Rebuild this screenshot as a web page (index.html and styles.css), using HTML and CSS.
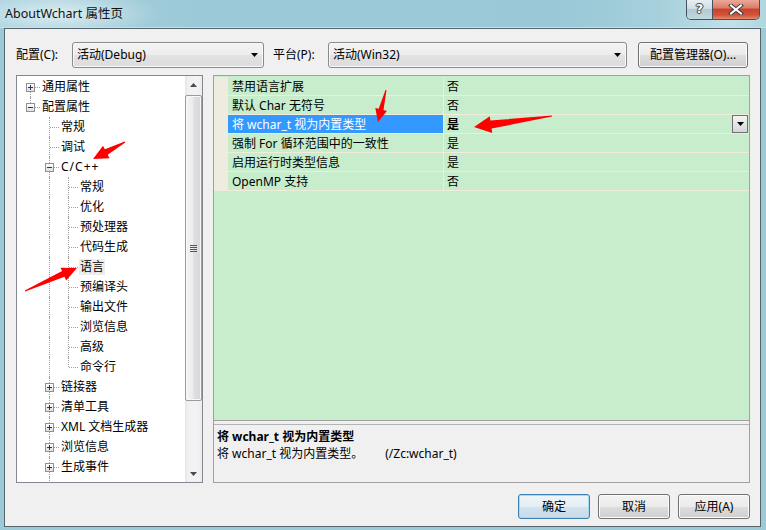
FILE: index.html
```html
<!DOCTYPE html>
<html>
<head>
<meta charset="utf-8">
<link rel="stylesheet" href="styles.css">
</head>
<body>
<div class="window">
  <div class="titlebar">
    <div class="title">AboutWchart 属性页</div>
    <div class="tb-btns">
      <div class="tb-help">?</div>
      <div class="tb-close">
        <svg width="16" height="11" viewBox="0 0 16 11"><path d="M3 1.5 L13 9.5 M13 1.5 L3 9.5" stroke="#3b3b3b" stroke-width="4" stroke-linecap="square"/><path d="M3 1.5 L13 9.5 M13 1.5 L3 9.5" stroke="#ffffff" stroke-width="2" stroke-linecap="square"/></svg>
      </div>
    </div>
  </div>
  <div class="client">
    <div class="toolbar">
      <span class="lbl lbl1">配置(C):</span>
      <div class="combo combo1"><span>活动(Debug)</span><svg class="carrow" width="7" height="4"><polygon points="0,0 7,0 3.5,4" fill="#000"/></svg></div>
      <span class="lbl lbl2">平台(P):</span>
      <div class="combo combo2"><span>活动(Win32)</span><svg class="carrow" width="7" height="4"><polygon points="0,0 7,0 3.5,4" fill="#000"/></svg></div>
      <div class="btn btn-mgr">配置管理器(O)...</div>
    </div>
    <div class="main">
      <div class="tree">
        <div class="items">
          <div class="row"><span class="c f"><i class="bx p"></i></span><span class="tx">通用属性</span></div>
          <div class="row"><span class="c l"><i class="bx"></i></span><span class="tx">配置属性</span></div>
          <div class="row"><span class="c"></span><span class="c t"></span><span class="tx">常规</span></div>
          <div class="row"><span class="c"></span><span class="c t"></span><span class="tx">调试</span></div>
          <div class="row"><span class="c"></span><span class="c t"><i class="bx"></i></span><span class="tx cpp">C/C++</span></div>
          <div class="row"><span class="c"></span><span class="c v"></span><span class="c t"></span><span class="tx">常规</span></div>
          <div class="row"><span class="c"></span><span class="c v"></span><span class="c t"></span><span class="tx">优化</span></div>
          <div class="row"><span class="c"></span><span class="c v"></span><span class="c t"></span><span class="tx">预处理器</span></div>
          <div class="row"><span class="c"></span><span class="c v"></span><span class="c t"></span><span class="tx">代码生成</span></div>
          <div class="row"><span class="c"></span><span class="c v"></span><span class="c t"></span><span class="tx sel">语言</span></div>
          <div class="row"><span class="c"></span><span class="c v"></span><span class="c t"></span><span class="tx">预编译头</span></div>
          <div class="row"><span class="c"></span><span class="c v"></span><span class="c t"></span><span class="tx">输出文件</span></div>
          <div class="row"><span class="c"></span><span class="c v"></span><span class="c t"></span><span class="tx">浏览信息</span></div>
          <div class="row"><span class="c"></span><span class="c v"></span><span class="c t"></span><span class="tx">高级</span></div>
          <div class="row"><span class="c"></span><span class="c v"></span><span class="c l"></span><span class="tx">命令行</span></div>
          <div class="row"><span class="c"></span><span class="c t"><i class="bx p"></i></span><span class="tx">链接器</span></div>
          <div class="row"><span class="c"></span><span class="c t"><i class="bx p"></i></span><span class="tx">清单工具</span></div>
          <div class="row"><span class="c"></span><span class="c t"><i class="bx p"></i></span><span class="tx">XML 文档生成器</span></div>
          <div class="row"><span class="c"></span><span class="c t"><i class="bx p"></i></span><span class="tx">浏览信息</span></div>
          <div class="row"><span class="c"></span><span class="c t"><i class="bx p"></i></span><span class="tx">生成事件</span></div>
          <div class="row"><span class="c"></span><span class="c t"></span><span class="tx"></span></div>
        </div>
        <div class="vscroll">
          <div class="sb-btn"><svg width="7" height="4"><polygon points="3.5,0 7,4 0,4" fill="#4a4a4a"/></svg></div>
          <div class="thumb"><div class="grip"></div></div>
          <div class="sb-fill"></div>
          <div class="sb-btn"><svg width="7" height="4"><polygon points="0,0 7,0 3.5,4" fill="#4a4a4a"/></svg></div>
        </div>
      </div>
      <div class="grid">
        <div class="props">
          <div class="prow"><span class="gut"></span><span class="pname">禁用语言扩展</span><span class="pval">否</span></div>
          <div class="prow"><span class="gut"></span><span class="pname">默认 Char 无符号</span><span class="pval">否</span></div>
          <div class="prow"><span class="gut"></span><span class="pname psel">将 wchar_t 视为内置类型</span><span class="pval bold">是<span class="ddbtn"><svg width="7" height="4"><polygon points="0,0 7,0 3.5,4" fill="#000"/></svg></span></span></div>
          <div class="prow"><span class="gut"></span><span class="pname">强制 For 循环范围中的一致性</span><span class="pval">是</span></div>
          <div class="prow"><span class="gut"></span><span class="pname">启用运行时类型信息</span><span class="pval">是</span></div>
          <div class="prow"><span class="gut"></span><span class="pname">OpenMP 支持</span><span class="pval">否</span></div>
        </div>
        <div class="desc">
          <div class="desc-title">将 wchar_t 视为内置类型</div>
          <div class="desc-text">将 wchar_t 视为内置类型。<span class="switch">(/Zc:wchar_t)</span></div>
        </div>
      </div>
    </div>
    <div class="buttons">
      <div class="btn btn-default">确定</div>
      <div class="btn">取消</div>
      <div class="btn">应用(A)</div>
    </div>
  </div>
  <svg class="annot" width="766" height="530" viewBox="0 0 766 530">
    <polygon fill="#ff0000" points="125.3,142.5 107.7,154.7 109.6,158.2 93,159 103,145.8 104.9,149.3 124.7,141.5"/>
    <polygon fill="#ff0000" points="25.2,291.5 64.5,276.8 66.1,280.5 77,268 60.5,267.7 62.1,270.9 24.8,290.5"/>
    <polygon fill="#ff0000" points="386.5,90.1 383.5,110 386.9,110.9 378,122 375.3,107.9 378.7,108.8 385.5,89.9"/>
    <polygon fill="#ff0000" points="552,116.6 491.6,128.6 492.2,133 474,127 489.8,116.2 490.4,120.6 552,115.4"/>
  </svg>
</div>
</body>
</html>
```

FILE: styles.css
```css
* { box-sizing: border-box; }
body {
  margin: 0;
  background: #9cc9d7;
  font-family: "Noto Sans", "Noto Sans CJK SC", sans-serif;
  font-size: 12px;
  color: #000;
}
.window {
  position: relative;
  width: 766px;
  height: 530px;
  display: flex;
  flex-direction: column;
  overflow: hidden;
  background: #9dcad7;
}
.titlebar {
  height: 28px;
  flex: none;
  display: flex;
  background:
    radial-gradient(ellipse 100px 24px at 60px 14px, rgba(255,255,255,0.6), rgba(255,255,255,0) 100%),
    linear-gradient(90deg, #a9d2de 0, #9cc9d7 200px, #9ac8d6 560px, #a6d0dc 660px, #c2e0e8 730px, #b0d6e0 766px);
  box-shadow: inset 0 -1px 0 #c4e2ea;
}
.title {
  padding-left: 5px;
  line-height: 27px;
  font-size: 12.5px;
  color: #111;
}
.tb-btns {
  margin-left: auto;
  margin-right: 6px;
  display: flex;
  height: 20px;
  border: 1px solid #44545e;
  border-top: none;
  border-radius: 0 0 5px 5px;
  overflow: hidden;
}
.tb-help {
  width: 26px;
  height: 19px;
  border-right: 1px solid #44545e;
  background: linear-gradient(#e6eff3 0, #cfdee5 45%, #b2c9d3 50%, #c2d8e1 100%);
  color: #fff;
  font-family: "DejaVu Sans", sans-serif;
  font-weight: bold;
  font-size: 13px;
  line-height: 18px;
  text-align: center;
  text-shadow: 0 0 1px #333, 0 0 1px #333, 1px 0 0 #555, -1px 0 0 #555, 0 1px 0 #555, 0 -1px 0 #555;
}
.tb-close {
  width: 46px;
  height: 19px;
  display: flex;
  align-items: center;
  justify-content: center;
  background: linear-gradient(#eaa999 0, #dd7e6b 40%, #c9432c 50%, #d2553c 80%, #e08a6f 100%);
}
.client {
  flex: 1;
  margin: 0 5px 3px 4px;
  border: 1px solid #56656c;
  background: #f0f0f0;
  display: flex;
  flex-direction: column;
}
.toolbar {
  display: flex;
  align-items: center;
  height: 26px;
  margin-top: 13px;
  padding: 0 12px 0 11px;
  flex: none;
}
.lbl { line-height: 16px; flex: none; }
.lbl1 { width: 56px; }
.lbl2 { width: 55px; margin-left: 9px; }
.combo {
  height: 26px;
  flex: none;
  display: flex;
  align-items: center;
  padding: 0 5px 0 4px;
  border: 1px solid #8a8a8a;
  border-radius: 3px;
  background: linear-gradient(#f4f4f4 0, #ececec 50%, #e2e2e2 51%, #dcdcdc 100%);
  box-shadow: inset 0 0 0 1px #fafafa;
}
.combo span { flex: 1; line-height: 16px; }
.combo1 { width: 192px; }
.combo2 { width: 299px; }
.btn {
  width: 72px;
  height: 25px;
  display: flex;
  align-items: center;
  justify-content: center;
  border: 1px solid #707070;
  border-radius: 3px;
  background: linear-gradient(#f2f2f2 0, #ebebeb 50%, #dddddd 51%, #cfcfcf 100%);
  box-shadow: inset 0 0 0 1px #fcfcfc;
  line-height: 16px;
}
.btn-mgr { width: 110px; margin-left: 11px; height: 26px; }
.btn-default {
  border-color: #3c7fb1;
  box-shadow: inset 0 0 0 1px #a7d8f4;
  background: linear-gradient(#eef5fa 0, #e4eef5 50%, #d3e3ee 51%, #c9dbe8 100%);
}
.main {
  display: flex;
  gap: 10px;
  height: 408px;
  margin-top: 7px;
  padding: 0 10px 0 11px;
  flex: none;
}
.tree {
  width: 187px;
  border: 1px solid #828790;
  background: #fff;
  display: flex;
}
.items {
  flex: 1;
  overflow: hidden;
  padding: 1px 0 0 4px;
}
.row {
  display: flex;
  align-items: center;
  height: 20px;
  white-space: nowrap;
}
.c {
  position: relative;
  width: 19px;
  align-self: stretch;
  flex: none;
}
.c.v::before, .c.t::before, .c.l::before, .c.f::before {
  content: "";
  position: absolute;
  left: 9px;
  top: 0;
  bottom: 0;
  border-left: 1px dotted #a0a0a0;
}
.c.l::before { bottom: 10px; }
.c.f::before { top: 10px; }
.c.t::after, .c.l::after, .c.f::after {
  content: "";
  position: absolute;
  left: 10px;
  right: 0;
  top: 10px;
  border-top: 1px dotted #a0a0a0;
}
.bx {
  position: absolute;
  left: 5px;
  top: 6px;
  width: 9px;
  height: 9px;
  border: 1px solid #919191;
  background: linear-gradient(#ffffff, #dedede);
  z-index: 1;
}
.bx::before {
  content: "";
  position: absolute;
  left: 1px;
  top: 3px;
  width: 5px;
  height: 1px;
  background: #24336b;
}
.bx.p::after {
  content: "";
  position: absolute;
  left: 3px;
  top: 1px;
  width: 1px;
  height: 5px;
  background: #24336b;
}
.tx {
  margin-left: 1px;
  padding: 0 1px;
  line-height: 16px;
}
.tx.cpp { letter-spacing: 1px; }
.tx.sel { background: #ececec; }
.vscroll {
  width: 17px;
  flex: none;
  display: flex;
  flex-direction: column;
  background: linear-gradient(90deg, #e4e4e4 0, #f1f1f1 3px, #f3f3f3 12px, #ececec 17px);
}
.sb-btn {
  height: 17px;
  flex: none;
  display: flex;
  align-items: center;
  justify-content: center;
}
.sb-btn svg { display: block; }
.thumb {
  flex: none;
  height: 306px;
  margin: 2px 0 0 0;
  border: 1px solid #9a9a9a;
  border-radius: 2px;
  background: linear-gradient(90deg, #f5f5f5 0, #ececec 45%, #dedede 55%, #d8d8d8 100%);
  box-shadow: inset 0 0 0 1px #f9f9f9;
  display: flex;
  align-items: center;
  justify-content: center;
}
.grip {
  width: 7px;
  height: 7px;
  background: repeating-linear-gradient(#555 0, #555 1px, transparent 1px, transparent 2px);
}
.sb-fill { flex: 1; }
.grid {
  width: 537px;
  border: 1px solid #a0a0a0;
  display: flex;
  flex-direction: column;
}
.props {
  flex: 1;
  background: #c7edcc;
  padding-top: 1px;
  border-bottom: 1px solid #a0a0a0;
}
.prow {
  display: flex;
  height: 19px;
  border-bottom: 1px solid #f2eddb;
}
.gut {
  width: 14px;
  flex: none;
  background: #eeebdf;
}
.pname {
  width: 215px;
  flex: none;
  padding-left: 4px;
  line-height: 19px;
  white-space: nowrap;
}
.psel { background: #3399ff; color: #fff; }
.pval {
  flex: 1;
  position: relative;
  display: flex;
  align-items: center;
  padding-left: 3px;
  border-left: 1px solid #f2eddb;
  line-height: 19px;
}
.bold { font-weight: bold; }
.ddbtn {
  margin-left: auto;
  margin-right: 1px;
  width: 16px;
  height: 18px;
  border: 1px solid #6f6f6f;
  background: linear-gradient(#f4f4f4, #d6d6d6);
  display: flex;
  align-items: center;
  justify-content: center;
  align-self: flex-start;
}
.ddbtn svg { display: block; }
.desc {
  height: 58px;
  flex: none;
  margin-top: 3px;
  border-top: 1px solid #b4b4b4;
  padding: 3px 0 0 3px;
  line-height: 17px;
}
.desc-title { font-weight: bold; }
.switch { margin-left: 22px; }
.buttons {
  display: flex;
  justify-content: flex-end;
  gap: 8px;
  margin-top: 11px;
  padding-right: 10px;
  flex: none;
}
.annot {
  position: absolute;
  left: 0;
  top: 0;
  pointer-events: none;
}
```
